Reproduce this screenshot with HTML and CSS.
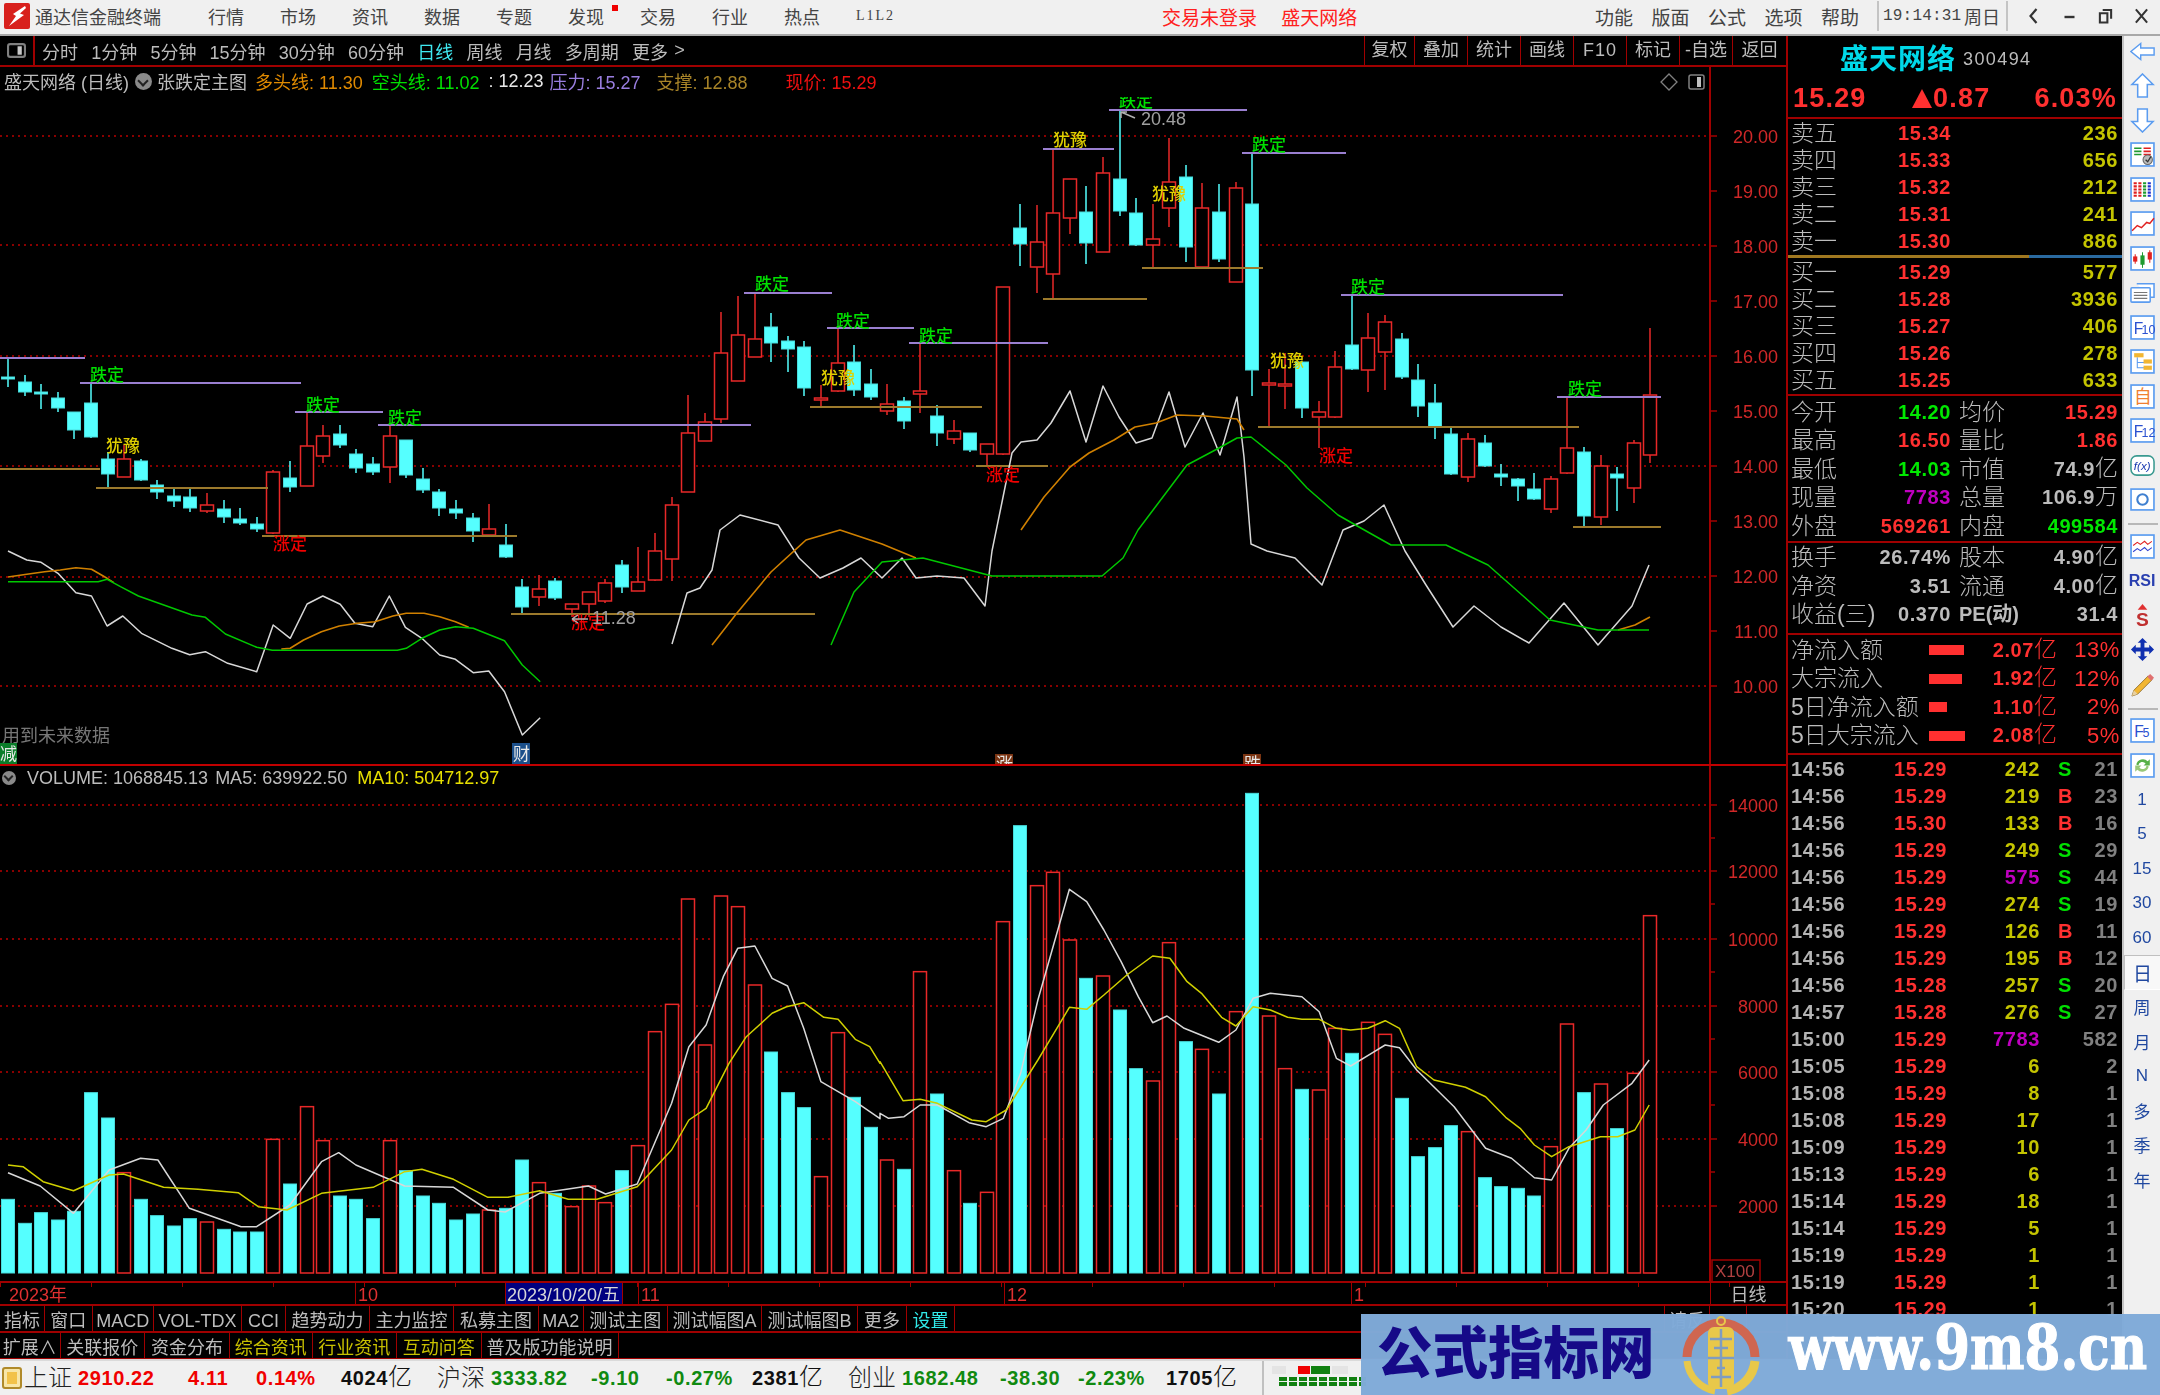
FILE: index.html
```html
<!DOCTYPE html>
<html lang="zh-CN">
<head>
<meta charset="utf-8">
<title>通达信金融终端</title>
<link rel="stylesheet" href="styles.css">
</head>
<body>
<div class="app">
  <header class="titlebar">
    <svg class="logo" viewBox="0 0 26 26"><rect width="26" height="26" rx="2" fill="#d8201c"/><path d="M21 3 L9 11 L12 13 L5 23 L20 12 L16 10.500 L22 5Z" fill="#fff"/></svg>
    <span class="appname">通达信金融终端</span>
    <nav class="menu">
      <span>行情</span><span>市场</span><span>资讯</span><span>数据</span><span>专题</span><span class="hasdot">发现<i class="dot"></i></span><span>交易</span><span>行业</span><span>热点</span><span class="small">L1L2</span>
    </nav>
    <div class="notice"><span>交易未登录</span><span>盛天网络</span></div>
    <div class="rightmenu"><span>功能</span><span>版面</span><span>公式</span><span>选项</span><span>帮助</span></div>
    <div class="clock"><span class="time">19:14:31</span><span>周日</span></div>
    <div class="winbtns">
      <svg viewBox="0 0 14 20"><path d="M10 3 L4 10 L10 17" fill="none" stroke="#333" stroke-width="2.200"/></svg>
      <svg viewBox="0 0 14 20"><path d="M2 11 H12" stroke="#333" stroke-width="2.400"/></svg>
      <svg viewBox="0 0 16 20"><path d="M5 3.500 H14 V13 M2 7 H10 V17 H2Z" fill="none" stroke="#333" stroke-width="2.200"/></svg>
      <svg viewBox="0 0 16 20"><path d="M2 3 L14 17 M14 3 L2 17" stroke="#333" stroke-width="2.200"/></svg>
    </div>
  </header>

  <main class="workspace">
    <section class="charts">
      <div class="periods">
        <div class="pbtn"><svg viewBox="0 0 18 14"><rect x="1" y="1" width="16" height="12" rx="2" fill="none" stroke="#808080" stroke-width="2"/><rect x="10" y="3" width="4" height="8" fill="#c8c8c8"/></svg></div>
        <div class="plist"><span>分时</span><span>1分钟</span><span>5分钟</span><span>15分钟</span><span>30分钟</span><span>60分钟</span><span class="on">日线</span><span>周线</span><span>月线</span><span>多周期</span><span>更多</span><span class="chev">&gt;</span></div>
        <div class="pright"><span class="c1">复权</span><span>叠加</span><span>统计</span><span>画线</span><span class="f10">F10</span><span>标记</span><span>-自选</span><span class="c8">返回</span></div>
      </div>

      <div class="pane mainpane">
        <svg id="mainchart" class="plot" viewBox="0 67 1786 697" width="1786" height="697"></svg>
        <div class="legend">
          <span class="lg">盛天网络 (日线)</span>
          <i class="circ"></i>
          <span class="lg">张跌定主图</span>
          <span class="orange">多头线: 11.30</span>
          <span class="green">空头线: 11.02</span>
          <span class="white">: 12.23</span>
          <span class="purple">压力: 15.27</span>
          <span class="gold">支撑: 12.88</span>
          <span class="red">现价: 15.29</span>
        </div>
        <svg class="miniicons" viewBox="0 0 46 18"><path d="M9 1 L17 9 L9 17 L1 9Z" fill="none" stroke="#808080" stroke-width="1.300"/><rect x="29" y="2" width="15" height="14" rx="2" fill="none" stroke="#808080" stroke-width="1.500"/><rect x="37" y="4" width="4" height="10" fill="#c0c0c0"/></svg>
      </div>

      <div class="pane volpane">
        <svg id="volchart" class="plot" viewBox="0 766 1786 515" width="1786" height="515"></svg>
        <div class="legend vlegend">
          <i class="circ small"></i>
          <span>VOLUME: 1068845.13</span>
          <span>MA5: 639922.50</span>
          <span class="ma10">MA10: 504712.97</span>
        </div>
      </div>

      <div class="dates">
        <span>2023年</span><span>10</span><span class="sel">2023/10/20/五</span><span></span><span>11</span><span>12</span><span>1</span><span class="period">日线</span>
      </div>
      <div class="tabs row1">
        <span>指标</span><span>窗口</span><span>MACD</span><span>VOL-TDX</span><span>CCI</span><span>趋势动力</span><span>主力监控</span><span>私募主图</span><span>MA2</span><span>测试主图</span><span>测试幅图A</span><span>测试幅图B</span><span>更多</span><span class="cyan">设置</span><span></span><span>请反</span><span></span><span></span>
      </div>
      <div class="tabs row2">
        <span>扩展∧</span><span>关联报价</span><span>资金分布</span><span class="yellow">综合资讯</span><span class="yellow">行业资讯</span><span class="yellow">互动问答</span><span>普及版功能说明</span><span></span>
      </div>
    </section>

    <aside class="quote">
      <div class="qhead"><span class="qname">盛天网络</span><span class="qcode">300494</span></div>
      <div class="qprice"><span>15.29</span><span><b class="tri"></b>0.87</span><span>6.03%</span></div>
      <div class="book">
        <div class="brow"><span>卖五</span><b>15.34</b><em>236</em></div>
        <div class="brow"><span>卖四</span><b>15.33</b><em>656</em></div>
        <div class="brow"><span>卖三</span><b>15.32</b><em>212</em></div>
        <div class="brow"><span>卖二</span><b>15.31</b><em>241</em></div>
        <div class="brow"><span>卖一</span><b>15.30</b><em>886</em></div>
      </div>
      <div class="split"></div>
      <div class="book">
        <div class="brow"><span>买一</span><b>15.29</b><em>577</em></div>
        <div class="brow"><span>买二</span><b>15.28</b><em>3936</em></div>
        <div class="brow"><span>买三</span><b>15.27</b><em>406</em></div>
        <div class="brow"><span>买四</span><b>15.26</b><em>278</em></div>
        <div class="brow"><span>买五</span><b>15.25</b><em>633</em></div>
      </div>
      <div class="stats first">
        <div class="srow"><span>今开</span><b class="g">14.20</b><span>均价</span><b class="r">15.29</b></div>
        <div class="srow"><span>最高</span><b class="r">16.50</b><span>量比</span><b class="r">1.86</b></div>
        <div class="srow"><span>最低</span><b class="g">14.03</b><span>市值</span><b>74.9<u>亿</u></b></div>
        <div class="srow"><span>现量</span><b class="m">7783</b><span>总量</span><b>106.9<u>万</u></b></div>
        <div class="srow"><span>外盘</span><b class="r">569261</b><span>内盘</span><b class="g">499584</b></div>
      </div>
      <div class="stats second">
        <div class="srow"><span>换手</span><b>26.74%</b><span>股本</span><b>4.90<u>亿</u></b></div>
        <div class="srow"><span>净资</span><b>3.51</b><span>流通</span><b>4.00<u>亿</u></b></div>
        <div class="srow"><span>收益(三)</span><b>0.370</b><span class="pe">PE(动)</span><b>31.4</b></div>
      </div>
      <div class="flows">
        <div class="frow"><span>净流入额</span><i class="bar" style="width:35px"></i><b>2.07<u>亿</u></b><b>13%</b></div>
        <div class="frow"><span>大宗流入</span><i class="bar" style="width:33px"></i><b>1.92<u>亿</u></b><b>12%</b></div>
        <div class="frow"><span>5日净流入额</span><i class="bar" style="width:18px"></i><b>1.10<u>亿</u></b><b>2%</b></div>
        <div class="frow"><span>5日大宗流入</span><i class="bar" style="width:36px"></i><b>2.08<u>亿</u></b><b>5%</b></div>
      </div>
      <div class="trades">
        <div class="trow"><span>14:56</span><b>15.29</b><em>242</em><i class="s">S</i><s>21</s></div>
        <div class="trow"><span>14:56</span><b>15.29</b><em>219</em><i class="b">B</i><s>23</s></div>
        <div class="trow"><span>14:56</span><b>15.30</b><em>133</em><i class="b">B</i><s>16</s></div>
        <div class="trow"><span>14:56</span><b>15.29</b><em>249</em><i class="s">S</i><s>29</s></div>
        <div class="trow"><span>14:56</span><b>15.29</b><em class="m">575</em><i class="s">S</i><s>44</s></div>
        <div class="trow"><span>14:56</span><b>15.29</b><em>274</em><i class="s">S</i><s>19</s></div>
        <div class="trow"><span>14:56</span><b>15.29</b><em>126</em><i class="b">B</i><s>11</s></div>
        <div class="trow"><span>14:56</span><b>15.29</b><em>195</em><i class="b">B</i><s>12</s></div>
        <div class="trow"><span>14:56</span><b>15.28</b><em>257</em><i class="s">S</i><s>20</s></div>
        <div class="trow"><span>14:57</span><b>15.28</b><em>276</em><i class="s">S</i><s>27</s></div>
        <div class="trow"><span>15:00</span><b>15.29</b><em class="m">7783</em><i></i><s>582</s></div>
        <div class="trow"><span>15:05</span><b>15.29</b><em>6</em><i></i><s>2</s></div>
        <div class="trow"><span>15:08</span><b>15.29</b><em>8</em><i></i><s>1</s></div>
        <div class="trow"><span>15:08</span><b>15.29</b><em>17</em><i></i><s>1</s></div>
        <div class="trow"><span>15:09</span><b>15.29</b><em>10</em><i></i><s>1</s></div>
        <div class="trow"><span>15:13</span><b>15.29</b><em>6</em><i></i><s>1</s></div>
        <div class="trow"><span>15:14</span><b>15.29</b><em>18</em><i></i><s>1</s></div>
        <div class="trow"><span>15:14</span><b>15.29</b><em>5</em><i></i><s>1</s></div>
        <div class="trow"><span>15:19</span><b>15.29</b><em>1</em><i></i><s>1</s></div>
        <div class="trow"><span>15:19</span><b>15.29</b><em>1</em><i></i><s>1</s></div>
        <div class="trow"><span>15:20</span><b>15.29</b><em>1</em><i></i><s>1</s></div>
      </div>
    </aside>

    <nav class="tools">
      <div class="tool"><svg viewBox="0 0 28 22"><path d="M1 11 L12 2 V7 H27 V15 H12 V20Z" fill="#fff" stroke="#5b9cf0" stroke-width="1.600"/></svg></div>
      <div class="tool"><svg viewBox="0 0 24 26"><path d="M12 1 L23 12 H17 V25 H7 V12 H1Z" fill="#fff" stroke="#5b9cf0" stroke-width="1.600"/></svg></div>
      <div class="tool"><svg viewBox="0 0 24 26"><path d="M12 25 L23 14 H17 V1 H7 V14 H1Z" fill="#fff" stroke="#5b9cf0" stroke-width="1.600"/></svg></div>
      <div class="tool"><svg viewBox="0 0 24 24"><rect x="1" y="1" width="22" height="22" fill="#fff" stroke="#5b9cf0" stroke-width="1.600"/><path d="M4 6 H11 M4 9 H11 M4 12 H11" stroke="#1f9a30" stroke-width="1.600"/><path d="M13 6 H20 M13 9 H20 M13 12 H20" stroke="#e02020" stroke-width="1.600"/><circle cx="17" cy="17" r="4.500" fill="#bbb" stroke="#666"/><path d="M15 17 L17 19 L20 14" fill="none" stroke="#333" stroke-width="1.200"/></svg></div>
      <div class="tool"><svg viewBox="0 0 24 24"><rect x="1" y="1" width="22" height="22" fill="#fff" stroke="#5b9cf0" stroke-width="1.600"/><path d="M5 5 V20" stroke="#e02020" stroke-width="3" stroke-dasharray="2 1"/><path d="M9.500 5 V20" stroke="#e02020" stroke-width="3" stroke-dasharray="2 1"/><path d="M14 5 V20" stroke="#1f9a30" stroke-width="3" stroke-dasharray="2 1"/><path d="M18.500 5 V20" stroke="#2030d0" stroke-width="3" stroke-dasharray="2 1"/></svg></div>
      <div class="tool"><svg viewBox="0 0 24 24"><rect x="1" y="1" width="22" height="22" fill="#fff" stroke="#5b9cf0" stroke-width="1.600"/><path d="M2 19 L7 14 L11 16 L16 11 L19 12 L23 7" fill="none" stroke="#e02020" stroke-width="1.400"/></svg></div>
      <div class="tool"><svg viewBox="0 0 24 24"><rect x="1" y="1" width="22" height="22" fill="#fff" stroke="#5b9cf0" stroke-width="1.600"/><path d="M5 8 V17 M19 4 V16" stroke="#e02020"/><path d="M12 6 V21" stroke="#1f9a30"/><rect x="3" y="10" width="4" height="5" fill="#e02020"/><rect x="10" y="9" width="4" height="9" fill="#1f9a30"/><rect x="17" y="6" width="4" height="7" fill="#e02020"/></svg></div>
      <div class="tool"><svg viewBox="0 0 26 24"><path d="M7 3 H25 V17 H21" fill="#fff" stroke="#5b9cf0" stroke-width="1.600"/><rect x="1" y="7" width="20" height="15" rx="1" fill="#fff" stroke="#5b9cf0" stroke-width="1.600"/><path d="M4 12 H18 M4 15 H18 M4 18 H18" stroke="#777" stroke-width="1.300"/></svg></div>
      <div class="tool"><svg viewBox="0 0 24 24"><rect x="1" y="1" width="22" height="22" fill="#fff" stroke="#5b9cf0" stroke-width="1.600"/><text x="3.500" y="18" class="ticon">F</text><text x="11" y="18" class="ticon sm">10</text></svg></div>
      <div class="tool"><svg viewBox="0 0 24 24"><rect x="1" y="1" width="22" height="22" fill="#fff" stroke="#5b9cf0" stroke-width="1.600"/><path d="M7 8 V18 H14 M7 13 H14" fill="none" stroke="#5b9cf0"/><rect x="4" y="4" width="9" height="4" fill="#f2b632"/><rect x="13" y="10" width="8" height="4" fill="#f2b632"/><rect x="13" y="16" width="8" height="4" fill="#f2b632"/></svg></div>
      <div class="tool"><svg viewBox="0 0 24 24"><rect x="1" y="1" width="22" height="22" fill="#fff" stroke="#5b9cf0" stroke-width="1.600"/><text x="12" y="18.500" class="ticon zi">自</text></svg></div>
      <div class="tool"><svg viewBox="0 0 24 24"><rect x="1" y="1" width="22" height="22" fill="#fff" stroke="#5b9cf0" stroke-width="1.600"/><text x="3.500" y="18" class="ticon">F</text><text x="11" y="18" class="ticon sm">12</text></svg></div>
      <div class="tool"><svg viewBox="0 0 26 24"><rect x="1" y="2" width="24" height="20" rx="6" fill="#fff" stroke="#3a9a90" stroke-width="1.600"/><text x="4" y="17" class="ticon fx">f(x)</text></svg></div>
      <div class="tool"><svg viewBox="0 0 24 24"><rect x="1" y="2" width="22" height="20" fill="#fff" stroke="#5b9cf0" stroke-width="1.600"/><circle cx="12" cy="12" r="5" fill="none" stroke="#4080d0" stroke-width="2"/></svg></div>
      <div class="toolsep"></div>
      <div class="tool"><svg viewBox="0 0 24 24"><rect x="1" y="1" width="22" height="22" fill="#fff" stroke="#5b9cf0" stroke-width="1.600"/><path d="M3 11 L7 8 L10 10 L14 7 L17 10 L21 7" fill="none" stroke="#e02020"/><path d="M3 17 L7 14 L10 16 L14 13 L17 16 L21 13" fill="none" stroke="#3040d0"/></svg></div>
      <div class="tool"><span class="rsi">RSI</span></div>
      <div class="tool"><svg viewBox="0 0 24 26"><path d="M12 1 L17 7 H7Z" fill="#e03030"/><text x="12" y="24" class="ticon dollar">S</text></svg></div>
      <div class="tool"><svg viewBox="0 0 26 26"><path d="M13 1 L18 6 H15 V11 H20 V8 L25 13 L20 18 V15 H15 V20 H18 L13 25 L8 20 H11 V15 H6 V18 L1 13 L6 8 V11 H11 V6 H8Z" fill="#1030b0"/></svg></div>
      <div class="tool"><svg viewBox="0 0 26 26"><path d="M4 19 L19 4 L23 8 L8 23 L2 25Z" fill="#f2b632" stroke="#806020" stroke-width=".800"/><path d="M18 5 L21 2 L25 6 L22 9Z" fill="#e07070"/><path d="M2 25 L4 19 L8 23Z" fill="#e8d0a0"/></svg></div>
      <div class="toolsep"></div>
      <div class="tool"><svg viewBox="0 0 24 24"><rect x="1" y="1" width="22" height="22" fill="#fff" stroke="#5b9cf0" stroke-width="1.600"/><text x="4" y="18" class="ticon">F</text><text x="12" y="18" class="ticon sm">5</text></svg></div>
      <div class="tool"><svg viewBox="0 0 24 24"><rect x="1" y="1" width="22" height="22" fill="#fff" stroke="#5b9cf0" stroke-width="1.600"/><path d="M6 11 A6.500 6.500 0 0 1 17 8 L19 6 V12 H13 L15 10 A4 4 0 0 0 8 12Z" fill="#58b048"/><path d="M18 13 A6.500 6.500 0 0 1 7 16 L5 18 V12 H11 L9 14 A4 4 0 0 0 16 12Z" fill="#98c878"/></svg></div>
      <div class="tool txt">1</div>
      <div class="tool txt">5</div>
      <div class="tool txt">15</div>
      <div class="tool txt">30</div>
      <div class="tool txt">60</div>
      <div class="tool txt cur">日</div>
      <div class="tool txt">周</div>
      <div class="tool txt">月</div>
      <div class="tool txt">N</div>
      <div class="tool txt">多</div>
      <div class="tool txt">季</div>
      <div class="tool txt">年</div>
    </nav>
  </main>

  <footer class="status">
    <span class="sicon"><i></i></span>
    <span class="k">上证</span><span class="r">2910.22</span><span class="r">4.11</span><span class="r">0.14%</span><span class="d">4024<u>亿</u></span>
    <span class="k">沪深</span><span class="g">3333.82</span><span class="g">-9.10</span><span class="g">-0.27%</span><span class="d">2381<u>亿</u></span>
    <span class="k">创业</span><span class="g">1682.48</span><span class="g">-38.30</span><span class="g">-2.23%</span><span class="d">1705<u>亿</u></span>
    <span class="smeter"><svg viewBox="0 0 96 30" width="96" height="30"><rect x="2" y="3" width="14" height="8" fill="#e4e4e4"/><rect x="28" y="3" width="12" height="8" fill="#f00000"/><rect x="41" y="3" width="19" height="8" fill="#108010"/><rect x="62" y="3" width="16" height="8" fill="#e4e4e4"/><path d="M9 16 H96 M9 21 H96" stroke="#108010" stroke-width="4" stroke-dasharray="8 2"/></svg></span>
  </footer>

  <div class="banner">
    <span class="btitle">公式指标网</span>
    <svg class="blogo" viewBox="0 0 80 80"><path d="M6 42 A34 34 0 0 1 74 42" fill="none" stroke="#cf6650" stroke-width="9"/><path d="M6 46 A34 34 0 0 0 34 76" fill="none" stroke="#e8c84a" stroke-width="7"/><path d="M74 46 A34 34 0 0 1 46 76" fill="none" stroke="#e8c84a" stroke-width="9"/><rect x="27" y="12" width="26" height="62" rx="6" fill="#e8c84a"/><circle cx="40" cy="6" r="4" fill="none" stroke="#e8c84a" stroke-width="2"/><path d="M29 24 H51 M33 33 H47 M27 43 H53 M36 53 H44 M30 62 H50 M40 14 V72" stroke="#7f9cc0" stroke-width="2.500"/></svg>
    <span class="burl">www.9m8.cn</span>
  </div>
</div>
<script src="script.js"></script>
</body>
</html>
```

FILE: styles.css
```css
* { box-sizing: border-box; }
html, body { margin: 0; padding: 0; }
body {
  width: 2160px; height: 1395px; overflow: hidden; background: #000;
  font-family: "Liberation Sans", "Noto Sans CJK SC", sans-serif;
  font-size: 18px; color: #bcbcbc;
}
.app { position: relative; width: 2160px; height: 1395px; display: flex; flex-direction: column; overflow: hidden; filter: blur(.35px); }
span, b, em, u, s, i { font-style: normal; text-decoration: none; white-space: nowrap; }

/* title bar */
.titlebar { height: 36px; flex: none; display: flex; align-items: center; background: #f0f0f0; border-bottom: 2px solid #a8a8a8; color: #444; padding-bottom: 2px; }
.logo { width: 26px; height: 26px; margin-left: 4px; flex: none; }
.appname { margin-left: 5px; letter-spacing: 0; }
.menu { display: flex; gap: 36px; margin-left: 47px; }
.menu .hasdot { position: relative; }
.dot { position: absolute; left: 44px; top: 2px; width: 6px; height: 6px; background: #f00000; }
.menu .small { font-size: 14px; letter-spacing: 2px; line-height: 26px; font-family: "Liberation Serif", serif; }
.notice { display: flex; gap: 24px; margin-left: 267px; color: #ff2020; font-size: 19px; }
.rightmenu { display: flex; gap: 18.500px; margin-left: auto; font-size: 19px; }
.clock { display: flex; gap: 11px; margin-left: 18px; padding: 0 6px 0 4px; height: 30px; align-items: center; border-left: 2px solid #c4c4c4; border-right: 2px solid #c4c4c4; }
.clock .time { font-family: "Liberation Mono", monospace; font-size: 16px; letter-spacing: .2px; width: 70px; }
.winbtns { display: flex; align-items: center; gap: 21px; padding: 0 11px 0 18px; }
.winbtns svg { width: 15px; height: 20px; }

/* workspace */
.workspace { height: 1323px; flex: none; display: grid; grid-template-columns: 1788px 334px 38px; overflow: hidden; }
.charts { border-right: 2px solid #a00000; display: flex; flex-direction: column; min-width: 0; }
.periods { height: 31px; flex: none; display: flex; border-bottom: 2px solid #a00000; }
.pbtn { width: 35px; border-right: 2px solid #a00000; display: flex; align-items: center; justify-content: center; flex: none; }
.pbtn svg { width: 19px; height: 15px; }
.plist { display: flex; gap: 13.200px; padding-left: 7px; align-items: center; }
.plist .on { color: #3fe8f0; }
.plist .chev { margin-left: -7px; }
.pright { margin-left: auto; display: flex; }
.pright span { width: 53px; text-align: center; border-left: 1px solid #a00000; line-height: 29px; }
.pright .c1 { width: 50px; }
.pright .c8 { width: 54px; }
.pright .f10 { letter-spacing: 1px; }

.pane { position: relative; flex: none; }
.mainpane { height: 699px; border-bottom: 2px solid #c00000; }
.volpane { height: 517px; border-bottom: 2px solid #a00000; }
.plot { display: block; position: absolute; left: 0; top: 0; overflow: hidden; }
.legend { position: absolute; left: 4px; top: 2px; display: flex; align-items: center; height: 24px; color: #bcbcbc; }
.circ { width: 17px; height: 17px; border-radius: 50%; background: #8a8a8a; margin: 0 5px 0 6px; position: relative; flex: none; }
.circ::after { content: ""; position: absolute; left: 4px; top: 4px; width: 6px; height: 6px; border-right: 2px solid #222; border-bottom: 2px solid #222; transform: rotate(45deg); }
.circ.small { width: 14px; height: 14px; margin: 0 9px 0 0; }
.circ.small::after { left: 3px; top: 2px; width: 5px; height: 5px; }
.legend .orange { color: #e08a00; margin-left: 8px; }
.legend .green { color: #00e000; margin-left: 9px; }
.legend .white { color: #e8e8e8; margin-left: 9px; }
.legend .purple { color: #9a7ee0; margin-left: 6px; }
.legend .gold { color: #a88428; margin-left: 16px; }
.legend .red { color: #ee1010; margin-left: 38px; }
.miniicons { position: absolute; left: 1660px; top: 6px; width: 46px; height: 18px; }
.vlegend { left: 2px; top: 0; font-size: 18px; gap: 7px; }
.vlegend .circ { margin-right: 4px; }
.vlegend .ma10 { color: #e8e000; margin-left: 3px; }

/* chart svg */
.grid { stroke: #8a0000; stroke-width: 2; stroke-dasharray: 2 4; }
.axis { stroke: #a00000; stroke-width: 2; }
.tick { stroke: #a00000; stroke-width: 1.500; }
.axlbl { fill: #d02828; font-size: 18px; text-anchor: end; }
.cr { fill: #000; stroke: #e82828; stroke-width: 1.500; }
.cc { fill: #55ffff; stroke: #48dcdc; stroke-width: 1; }
.wr { stroke: #e82828; stroke-width: 1.500; }
.wc { stroke: #55ffff; stroke-width: 1.500; }
.hp { stroke: #9a7fd0; stroke-width: 2; }
.hb { stroke: #9c7a2c; stroke-width: 2; }
.ln { fill: none; stroke-linejoin: round; }
.lw { stroke: #d8d8d8; stroke-width: 1.500; }
.lo { stroke: #d08000; stroke-width: 1.600; }
.lg2 { stroke: #00c800; stroke-width: 1.500; }
.ly { stroke: #d0d000; stroke-width: 1.500; }
.mark { font-size: 17px; font-weight: 500; }
.mu { fill: #00e000; }
.mh { fill: #e0d000; }
.md { fill: #f00000; }
.note { fill: #a0a0a0; font-size: 18px; }
.arrow { stroke: #b0b0b0; stroke-width: 1.500; fill: none; }
.future { fill: #777; font-size: 18px; }
.tagtxt { fill: #e8e8e8; font-size: 17px; }
.tg { fill: #0b7d2a; }
.tb { fill: #1b4f8a; }
.to { fill: #7a3412; }
.xbox { fill: #000; stroke: #a00000; stroke-width: 1.500; }
.xtxt { fill: #b04040; font-size: 17px; }
.mask { fill: #000; }

/* dates + tabs */
.dates { height: 23px; flex: none; display: grid; grid-template-columns: 355px 150px 117px 16px 366px 347px 359px 1fr; border-bottom: 2px solid #a00000; color: #e03030; line-height: 24px; background-size: 91px 4px; background-repeat: repeat-x; background-image: linear-gradient(to right, #a00000 1.500px, transparent 1.500px); }
.dates span { border-left: 1px solid #a00000; padding-left: 2px; overflow: hidden; }
.dates span:first-child { border-left: 0; padding-left: 9px; }
.dates .sel { background: #000080; color: #d8d8d8; padding-left: 1px; }
.dates .period { color: #bcbcbc; text-align: center; padding-left: 0; }
.tabs { flex: none; display: grid; border-bottom: 2px solid #a00000; line-height: 24px; text-align: center; }
.tabs span { border-right: 1px solid #a00000; overflow: hidden; padding-top: 3px; }
.row1 { height: 27px; grid-template-columns: 45px 47.500px 61.500px 88px 44px 84px 84px 85px 44.500px 84.500px 94px 96px 49px 48px 710px 45px 37px 1fr; }
.row2 { height: 27px; grid-template-columns: 60.500px 84.500px 85px 82.500px 84.500px 84.500px 137px 1fr; }
.tabs .cyan { color: #30e8e8; }
.tabs .yellow { color: #c8c000; }
.tabs span:last-child { border-right: 0; }

/* quote */
.quote { overflow: hidden; padding: 0; display: flex; flex-direction: column; height: 1323px; }
.qhead { height: 44px; flex: none; display: flex; align-items: center; padding: 0 0 3px 52px; gap: 7px; }
.qname { color: #00d8e8; font-size: 28px; font-weight: 700; letter-spacing: 1px; }
.qcode { font-size: 18px; color: #bcbcbc; letter-spacing: 1.400px; padding-top: 6px; }
.qprice { height: 39px; flex: none; display: grid; grid-template-columns: 119px 112px 1fr; align-items: center; padding-left: 5px; border-bottom: 2px solid #a00000; color: #ff3030; font-size: 27px; font-weight: 700; letter-spacing: 1.200px; }
.qprice span:last-child { text-align: right; padding-right: 5px; }
.tri { display: inline-block; width: 0; height: 0; border-left: 10px solid transparent; border-right: 10px solid transparent; border-bottom: 19px solid #ff3030; margin-right: 1px; vertical-align: -1px; }
.book { flex: none; padding: 1px 4px 0 3px; }
.brow { height: 27px; display: grid; grid-template-columns: 107px 54px 1fr; align-items: center; }
.brow span, .srow span, .frow span { font-size: 23px; color: #bcbcbc; line-height: 27px; font-weight: 300; }
.brow b, .srow b, .frow b, .trow b { color: #ff3030; font-size: 20px; letter-spacing: .6px; }
.brow em { color: #c4c400; font-size: 20px; font-weight: 700; text-align: right; letter-spacing: .6px; }
.split { height: 3px; flex: none; background: linear-gradient(to right, #a07820 0 241px, #2a6aa0 241px); margin-top: 0; }
.stats { flex: none; padding: 0 4px 0 3px; border-top: 2px solid #a00000; }
.stats.first { margin-top: 0; padding-top: 2px; }
.stats.second { padding-top: 1px; padding-bottom: 4px; }
.srow { height: 28.500px; display: grid; grid-template-columns: 60px 100px 78px 1fr; align-items: center; }
.srow span:nth-child(3) { padding-left: 8px; }
.srow b { text-align: right; color: #bcbcbc; }
.srow b.r { color: #ff3030; }
.srow b.g { color: #00e800; }
.srow b.m { color: #c000c0; }
.srow u { font-size: 23px; font-weight: 300; letter-spacing: 0; line-height: 0; }
.srow .pe { font-weight: 700 !important; font-size: 20px !important; white-space: nowrap; }
.flows { flex: none; padding: 1px 2px 0 3px; border-top: 2px solid #a00000; }
.frow { height: 28.500px; display: grid; grid-template-columns: 138px 60px 68px 1fr; align-items: center; }
.frow .bar { height: 10px; background: #ff3030; display: block; }
.frow b { text-align: right; }
.frow b:last-child { font-weight: 400; font-size: 22px; }
.frow u { font-size: 23px; font-weight: 300; letter-spacing: 0; line-height: 0; }
.trades { flex: none; border-top: 2px solid #a00000; margin-top: 3px; padding: 1px 4px 0 3px; }
.trow { height: 27px; display: grid; grid-template-columns: 103px 54px 92px 36px 1fr; align-items: center; font-size: 20px; font-weight: 700; letter-spacing: .6px; }
.trow span { color: #b4b4b4; }
.trow em { color: #c4c400; text-align: right; }
.trow em.m { color: #c000c0; }
.trow .s { color: #00e000; padding-left: 18px; letter-spacing: 0; }
.trow .b { color: #ff3030; padding-left: 18px; letter-spacing: 0; }
.trow s { color: #808080; text-align: right; }

/* tool strip */
.tools { background: #f0f0f0; border-left: 2px solid #c4c4c4; padding-top: 0; display: flex; flex-direction: column; align-items: stretch; overflow: hidden; }
.tool { height: 34.500px; flex: none; display: flex; align-items: center; justify-content: center; }
.tools > .tool:first-child { margin-top: -2px; }
.tool svg { width: 25px; height: 25px; }
.toolsep { height: 12px; flex: none; position: relative; }
.toolsep::after { content: ""; position: absolute; left: 4px; right: 2px; top: 6px; height: 2px; background: #b8b8b8; }
.tool.txt { color: #2048a0; font-size: 17px; }
.tool.cur { background: #f8f8f8; border: 1px solid #c0c0c0; border-right: 0; border-bottom-color: #fff; font-size: 19px; }
.ticon { fill: #2a50d0; font-size: 15px; font-family: "Liberation Sans", sans-serif; }
.ticon.sm { font-size: 12px; }
.ticon.zi { fill: #f08030; text-anchor: middle; font-size: 17px; }
.ticon.fx { fill: #1838b0; font-size: 12px; font-style: italic; }
.ticon.dollar { fill: #c03030; font-weight: 700; text-anchor: middle; font-size: 20px; }
.rsi { color: #2a40b0; font-weight: 700; font-size: 16px; }

/* status */
.status { height: 36px; flex: none; background: #f0f0f0; border-top: 2px solid #dadada; display: grid; grid-template-columns: 24px 54px 110px 68px 85px 96px 54px 100px 75px 86px 96px 54px 98px 78px 88px 96px 1fr; align-items: center; font-size: 20px; font-weight: 700; letter-spacing: .6px; color: #000; line-height: 30px; }
.sicon { display: flex; align-items: center; padding-left: 2px; }
.sicon i { width: 20px; height: 22px; background: #f2c24a; border: 2px solid #b08a2a; border-radius: 3px; box-shadow: inset 0 0 0 3px #f8e6a8; display: block; }
.status .k { font-size: 24px; font-weight: 300; color: #222; letter-spacing: 0; }
.status .r { color: #f00000; }
.status .g { color: #108a10; }
.status .d { color: #101010; }
.status u { font-size: 24px; font-weight: 300; letter-spacing: 0; line-height: 0; }
.smeter { border-left: 2px solid #c0c0c0; height: 34px; display: flex; align-items: center; padding-left: 6px; }

/* banner */
.banner { position: absolute; left: 1361px; top: 1314px; width: 799px; height: 81px; background: rgba(127,170,216,.98); display: flex; align-items: center; padding-left: 16px; }
.btitle { color: #160a88; font-size: 55.500px; font-weight: 900; letter-spacing: 0; line-height: 1; }
.blogo { width: 80px; height: 80px; margin-left: 26px; flex: none; }
.burl { margin-left: 28px; font-family: "DejaVu Serif", serif; font-weight: 700; font-size: 51.500px; color: #fff; letter-spacing: 0; transform: translateY(-6px) scaleY(1.18); line-height: 1; -webkit-text-stroke: 1px #fff; }
```

FILE: script.js
```js
// Candles: [red?, bodyTop, bodyBottom, wickTop, wickBottom] in page pixels
var C = [[0,377,379,358,387],[0,382,392,375,396],[0,392,394,384,409],[0,398,408,392,412],[0,412,430,412,439],[0,403,437,383,438],[0,459,474,452,488],[1,459,477,445,477],[0,461,480,459,481],[0,485,492,480,499],
[0,496,501,489,507],[0,497,508,489,512],[1,505,511,493,513],[0,509,517,500,523],[0,519,523,508,525],[0,524,529,517,532],[1,472,533,470,534],[0,478,487,461,492],[1,446,486,412,486],[1,436,456,425,463],
[0,434,445,425,448],[0,454,468,449,473],[0,464,472,457,475],[1,436,467,426,483],[0,440,475,440,478],[0,479,490,468,493],[0,492,508,489,516],[0,509,513,500,519],[0,518,531,513,542],[1,529,535,504,536],
[0,545,557,524,558],[0,587,607,579,614],[1,589,597,575,606],[0,581,598,578,600],[1,604,609,604,617],[1,592,604,592,617],[1,583,601,579,603],[0,565,587,560,593],[1,582,591,547,591],[1,551,580,533,581],
[1,505,559,497,581],[1,433,492,395,492],[1,422,441,413,441],[1,353,419,312,423],[1,335,381,296,381],[1,339,357,293,357],[0,327,343,313,362],[0,341,349,336,372],[0,347,388,341,396],[1,398,400,385,407],
[1,363,391,328,392],[0,362,390,345,396],[0,384,397,369,400],[1,404,411,384,415],[0,401,421,397,429],[1,391,394,343,413],[0,416,433,405,446],[1,431,439,420,444],[0,433,450,433,452],[1,444,454,444,465],
[1,287,454,287,455],[0,228,244,204,266],[1,242,267,205,293],[1,213,274,149,299],[1,179,218,179,234],[0,212,243,186,264],[1,173,252,157,252],[0,179,211,110,216],[0,213,245,198,246],[1,239,245,204,267],
[1,182,208,138,227],[0,177,247,165,262],[1,208,267,183,267],[0,212,259,184,262],[1,188,282,182,282],[0,204,370,154,396],[1,383,385,369,427],[1,384,385,353,409],[0,362,408,362,418],[1,412,417,401,448],
[1,367,417,351,418],[0,345,369,295,370],[1,338,370,313,392],[1,322,352,315,390],[0,339,377,333,379],[0,380,406,364,417],[0,403,427,384,439],[0,434,474,427,475],[1,439,477,433,482],[0,443,466,435,467],
[0,474,477,464,486],[0,479,486,478,501],[0,489,499,473,500],[1,479,509,476,513],[1,448,473,397,474],[0,452,516,447,527],[1,466,517,455,525],[0,474,478,467,511],[1,443,488,440,503],[1,395,455,328,463]];

// Volume bar tops, read off the chart (y = 780 + v/3)
var V = [1258,1330,1298,1320,1294,938,1014,1178,1258,1307,1338,1316,1326,1348,1356,1356,1078,1212,980,1082,1248,1258,1316,1082,1172,1248,1270,1320,1302,1290,1285,1140,1208,1240,1280,1218,1268,1172,1097,755,673,357,795,348,380,615,816,938,983,1190,758,952,1042,1140,1168,575,942,1172,1270,1237,425,137,317,277,480,595,588,690,866,903,488,785,808,942,695,40,708,866,928,930,745,820,727,763,955,1130,1103,1037,1055,1193,1220,1225,1248,1100,732,938,912,1046,880,407];

function X(i) { return 8 + 16.59 * i; }
function line(x1, y1, x2, y2, c) { return '<line x1="' + x1 + '" y1="' + y1 + '" x2="' + x2 + '" y2="' + y2 + '" class="' + c + '"/>'; }
function rect(x, y, w, h, c) { return '<rect x="' + x + '" y="' + y + '" width="' + w + '" height="' + h + '" class="' + c + '"/>'; }
function text(x, y, t, c) { return '<text x="' + x + '" y="' + y + '" class="' + c + '">' + t + '</text>'; }
function poly(p, c) { return '<polyline class="ln ' + c + '" points="' + p.map(function (q) { return q[0].toFixed(1) + ',' + q[1].toFixed(1); }).join(' ') + '"/>'; }
// convert list [x,y,x,y...] measured in a scaled view to page pixels
function pts(a, x0, sx, y0, sy) { var o = []; for (var i = 0; i < a.length; i += 2) o.push([x0 + a[i] / sx, y0 + a[i + 1] / sy]); return o; }
function raw(a) { return pts(a, 0, 1, 0, 1); }

var m = '';
[136, 245, 356, 466, 577, 686].forEach(function (y) { m += line(0, y, 1710, y, 'grid'); });
C.forEach(function (c, i) {
  var x = Math.round(X(i));
  m += line(x, c[3], x, c[4], c[0] ? 'wr' : 'wc');
  m += rect(x - 6.5, c[1], 13, Math.max(c[2] - c[1], 2), c[0] ? 'cr' : 'cc');
});
[[0,85,358],[80,301,383],[295,383,412],[378,751,425],[744,832,293],[827,914,328],[909,1048,343],[1109,1247,110],[1043,1114,149],[1242,1346,153],[1341,1563,295],[1557,1661,397]].forEach(function (h) { m += line(h[0], h[2], h[1], h[2], 'hp'); });
[[0,100,469],[96,268,488],[262,517,536],[511,815,614],[810,982,407],[976,1048,466],[1043,1147,299],[1142,1263,268],[1258,1579,427],[1573,1661,527]].forEach(function (h) { m += line(h[0], h[2], h[1], h[2], 'hb'); });

// indicator lines
m += poly(pts([18,663,60,690,92,697,130,730,170,788,205,798,240,888,275,858,317,910,385,955,425,974,460,965,510,1000,575,1025,612,885,650,925,688,822,723,798,762,823,795,880,835,890,872,798,908,892,945,925,985,975,1020,988,1060,1028,1095,1023,1130,1085,1170,1215,1210,1163], 0, 2.24, 330, 3), 'lw');
m += poly(raw([672,644,687,593,700,588,712,570,720,530,740,515,778,525,799,558,820,578,843,568,861,558,882,578,902,558,916,578,937,576,964,578,985,606,992,551,1001,507,1012,453,1021,442,1037,440,1051,423,1070,391,1086,442,1103,386,1119,417,1136,443,1152,438,1169,392,1185,447,1203,413,1220,455,1237,397,1244,457,1251,544,1267,551,1295,558,1322,585,1343,530,1364,521,1384,505,1405,551,1426,585,1453,627,1474,606,1501,627,1529,643,1564,603,1598,645,1632,606,1649,565]), 'lw');
m += poly(pts([18,741,60,733,100,725,135,720,170,713,205,718,240,745,255,758], 0, 2.24, 330, 3), 'lo');
m += poly(pts([630,957,650,955,680,930,720,905,760,888,800,880,840,875,880,858,910,850,950,850,985,860,1020,875,1050,892], 0, 2.24, 330, 3), 'lo');
m += poly(raw([712,645,737,613,771,572,806,540,840,530,882,544,916,558]), 'lo');
m += poly(raw([1021,530,1044,497,1070,467,1089,453,1114,440,1135,427,1156,423,1177,415,1205,416,1237,419,1244,430]), 'lo');
m += poly(raw([1618,630,1635,625,1650,617]), 'lo');
m += poly(pts([18,755,220,755,240,748,270,770,310,798,430,855,460,862,505,912,575,952,610,961,890,961,910,955,945,925,985,900,1020,890,1060,895,1130,932,1170,1005,1210,1055], 0, 2.24, 330, 3), 'lg2');
m += poly(raw([831,645,854,592,882,562,923,558,992,576,1102,576,1123,558,1138,530,1187,465,1219,448,1237,438,1251,437,1286,465,1307,488,1338,515,1359,527,1391,545,1446,545,1488,565,1522,595,1550,620,1598,630,1649,630]), 'lg2');

// markers
[[90,381],[306,411],[388,424],[755,290],[836,327],[919,342],[1119,107],[1252,151],[1351,293],[1568,395]].forEach(function (p) { m += text(p[0], p[1], '跌定', 'mark mu'); });
m += rect(1108, 67, 64, 30, 'mask');
[[106,452],[1053,146],[821,384],[1152,200],[1270,367]].forEach(function (p) { m += text(p[0], p[1], '犹豫', 'mark mh'); });
[[273,550],[571,629],[986,481],[1319,462]].forEach(function (p) { m += text(p[0], p[1], '涨定', 'mark md'); });
m += text(592, 624, '11.28', 'note');
m += '<path class="arrow" d="M572 619 H588 M572 619 L578 615 M572 619 L578 623"/>';
m += text(1141, 125, '20.48', 'note');
m += '<path class="arrow" d="M1121 112 L1135 118 M1121 112 H1127 M1121 112 V118"/>';
m += text(2, 742, '用到未来数据', 'future');
m += rect(0, 743, 17, 21, 'tg') + text(0, 760, '减', 'tagtxt');
m += rect(512, 743, 18, 21, 'tb') + text(513, 760, '财', 'tagtxt');
m += rect(995, 754, 18, 10, 'to') + text(996, 770, '涨', 'tagtxt');
m += rect(1243, 754, 18, 10, 'to') + text(1244, 770, '跌', 'tagtxt');

// price axis
m += line(1710, 67, 1710, 764, 'axis');
for (var p = 0; p <= 10; p++) {
  var y = 136 + p * 55;
  m += line(1710, y, 1717, y, 'tick');
  m += text(1778, y + 6.5, (20 - p).toFixed(2), 'axlbl');
}
document.getElementById('mainchart').innerHTML = m;

// volume pane
var v = '';
[805, 871, 939, 1006, 1072, 1139, 1206].forEach(function (y, i) {
  v += line(0, y, 1710, y, 'grid');
  v += line(1710, y, 1717, y, 'tick');
  v += text(1778, y + 6.5, String(14000 - i * 2000), 'axlbl');
  if (i < 6) v += line(1710, y + 33, 1715, y + 33, 'tick');
});
V.forEach(function (t, i) {
  var top = 780 + t / 3, x = Math.round(X(i));
  v += rect(x - 6.5, top, 13, 1273 - top, C[i][0] ? 'cr' : 'cc');
});
v += poly(pts([14,1178,70,1218,128,1300,190,1170,245,1135,275,1140,330,1285,420,1340,447,1340,505,1275,560,1145,590,1118,620,1155,705,1218,790,1222,850,1290,880,1296,940,1240,1025,1218,1055,1242,1110,1212,1170,970,1200,800,1230,735,1260,590,1285,505,1315,498,1345,595,1372,618,1400,745,1430,905,1490,965,1533,1016], 0, 1.742, 780, 3)
  .concat(pts([0,1000,15,1015,42,1010,70,975,100,975,155,1028,185,1040,215,1015,245,880,275,660,330,328,360,365,390,450,420,545,450,650,475,728,500,708,530,745,590,787,620,750,650,655,680,640,735,650,765,695,795,835,820,858,880,795,905,803,935,870,1000,980,1055,1105,1100,1135,1140,1193,1170,1200,1200,1105,1230,1050,1260,975,1310,910,1340,840], 880, 1.742, 780, 3)), 'lw');
v += poly(pts([14,1155,40,1160,75,1205,128,1232,190,1185,215,1182,285,1222,345,1228,415,1238,450,1280,500,1290,560,1240,650,1222,705,1175,735,1168,790,1198,850,1252,885,1252,940,1232,990,1258,1040,1258,1110,1220,1170,1110,1200,1020,1230,985,1270,850,1300,770,1345,700,1370,680,1400,668,1435,712,1460,718,1490,778,1515,800,1533,850], 0, 1.742, 780, 3)
  .concat(pts([0,845,40,962,70,958,100,970,160,1020,185,1025,220,990,275,840,330,682,360,688,390,645,430,585,475,528,505,535,535,605,560,640,595,712,620,738,650,680,680,690,710,712,735,718,765,718,795,745,820,750,850,745,880,722,905,745,935,860,965,900,1020,922,1055,950,1090,1012,1115,1045,1140,1095,1170,1130,1200,1100,1255,1070,1285,1070,1315,1050,1340,975], 880, 1.742, 780, 3)), 'ly');
v += line(1710, 766, 1710, 1281, 'axis');
v += rect(1712, 1260, 48, 22, 'xbox') + text(1715, 1277, 'X100', 'xtxt');
document.getElementById('volchart').innerHTML = v;
```
